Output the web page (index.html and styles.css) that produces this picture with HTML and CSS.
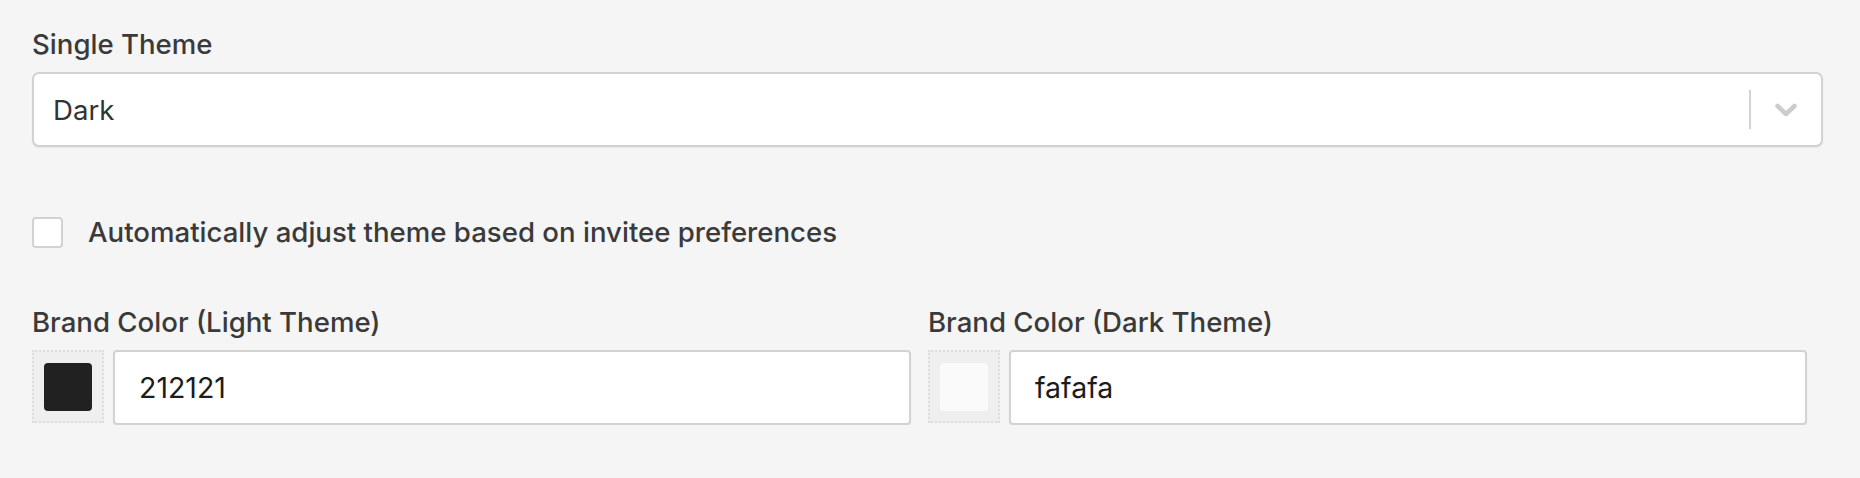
FILE: index.html
```html
<!DOCTYPE html>
<html lang="en">
<head>
  <meta charset="UTF-8">
  <meta name="viewport" content="width=device-width, initial-scale=1.0">
  <title>theme settings</title>
  <link rel="stylesheet" href="styles.css">
</head>
<body>
  <div class="page">
    <div class="field">
      <div class="label">Single Theme</div>
      <div class="select">
        <span class="value">Dark</span>
        <span class="sep"></span>
        <svg class="chev" width="24" height="16" viewBox="0 0 24 16">
          <path d="M3.5 4 L12 12 L20.5 4" fill="none" stroke="#cccccc" stroke-width="4.5" stroke-linecap="round" stroke-linejoin="round"/>
        </svg>
      </div>
    </div>

    <label class="check">
      <span class="box"></span>
      <span class="check-text">Automatically adjust theme based on invitee preferences</span>
    </label>

    <div class="colors">
      <div class="field">
        <div class="label">Brand Color (Light Theme)</div>
        <div class="color-row">
          <div class="swatch"><span class="chip dark"></span></div>
          <div class="input">212121</div>
        </div>
      </div>
      <div class="field">
        <div class="label">Brand Color (Dark Theme)</div>
        <div class="color-row">
          <div class="swatch"><span class="chip light"></span></div>
          <div class="input">fafafa</div>
        </div>
      </div>
    </div>
  </div>
</body>
</html>
```

FILE: styles.css
```css
body {
  margin: 0;
  background: #f5f5f5;
  font-family: Inter, "Liberation Sans", sans-serif;
  color: #3a3a3a;
}
.page {
  padding: 28px 37px 0 32px;
}
.label {
  font-size: 27.6px;
  font-weight: 500;
  line-height: 32px;
  margin-bottom: 12px;
}

/* select */
.select {
  height: 75px;
  box-sizing: border-box;
  background: #fff;
  border: 2px solid #d2d2d2;
  border-radius: 7px;
  box-shadow: 0 1px 2px rgba(0, 0, 0, 0.06);
  display: flex;
  align-items: center;
  padding: 0 23px 0 19px;
}
.value {
  flex: 1;
  font-size: 27.6px;
  color: #333;
}
.sep {
  width: 2px;
  height: 39px;
  background: #d2d2d2;
  margin-right: 23px;
}
.chev {
  display: block;
}

/* checkbox */
.check {
  display: flex;
  align-items: center;
  gap: 25px;
  margin: 69px 0 58px;
}
.box {
  width: 31px;
  height: 31px;
  box-sizing: border-box;
  background: #fff;
  border: 2px solid #d2d2d2;
  border-radius: 4px;
}
.check-text {
  font-size: 27.6px;
  font-weight: 500;
  line-height: 32px;
}

/* brand colors */
.colors {
  display: grid;
  grid-template-columns: 879px 879px;
  gap: 17px;
}
.color-row {
  display: flex;
  gap: 9px;
}
.swatch {
  width: 72px;
  height: 73px;
  box-sizing: border-box;
  border: 2px dotted #dcdcdc;
  background: #efefef;
  display: flex;
  align-items: center;
  justify-content: center;
}
.chip {
  width: 48px;
  height: 48px;
  border-radius: 4px;
}
.chip.dark {
  background: #212121;
}
.chip.light {
  background: #fafafa;
}
.input {
  flex: 1;
  height: 75px;
  box-sizing: border-box;
  background: #fff;
  border: 2px solid #d2d2d2;
  border-radius: 4px;
  box-shadow: 0 1px 2px rgba(0, 0, 0, 0.06);
  display: flex;
  align-items: center;
  padding-left: 24px;
  font-size: 28.5px;
  color: #1c1c1c;
}
```
